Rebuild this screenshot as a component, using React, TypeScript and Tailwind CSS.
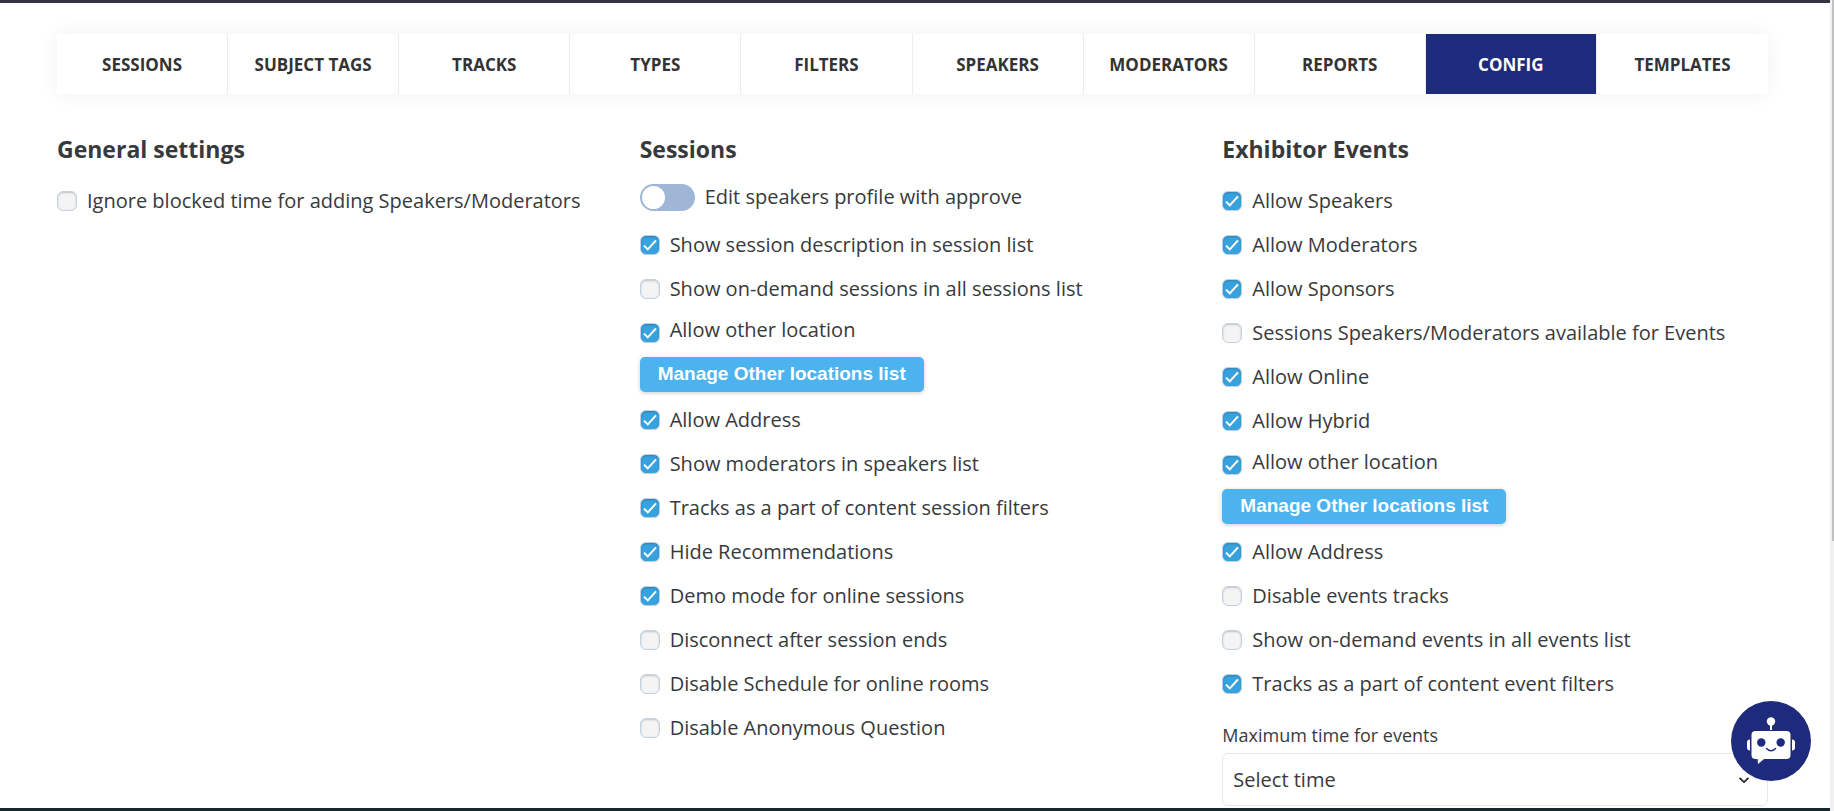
import { useId, useState } from "react";

const tabs = [
  "Sessions",
  "Subject tags",
  "Tracks",
  "Types",
  "Filters",
  "Speakers",
  "Moderators",
  "Reports",
  "Config",
  "Templates",
];

type Option = { label: string; on?: boolean; manage?: boolean };

const general: Option[] = [{ label: "Ignore blocked time for adding Speakers/Moderators" }];

const sessions: Option[] = [
  { label: "Show session description in session list", on: true },
  { label: "Show on-demand sessions in all sessions list" },
  { label: "Allow other location", on: true, manage: true },
  { label: "Allow Address", on: true },
  { label: "Show moderators in speakers list", on: true },
  { label: "Tracks as a part of content session filters", on: true },
  { label: "Hide Recommendations", on: true },
  { label: "Demo mode for online sessions", on: true },
  { label: "Disconnect after session ends" },
  { label: "Disable Schedule for online rooms" },
  { label: "Disable Anonymous Question" },
];

const exhibitor: Option[] = [
  { label: "Allow Speakers", on: true },
  { label: "Allow Moderators", on: true },
  { label: "Allow Sponsors", on: true },
  { label: "Sessions Speakers/Moderators available for Events" },
  { label: "Allow Online", on: true },
  { label: "Allow Hybrid", on: true },
  { label: "Allow other location", on: true, manage: true },
  { label: "Allow Address", on: true },
  { label: "Disable events tracks" },
  { label: "Show on-demand events in all events list" },
  { label: "Tracks as a part of content event filters", on: true },
];

function CheckRow({ label, on = false, manage = false }: Option) {
  const id = useId();
  return (
    <>
      <div className="flex h-11 items-center gap-[10px]">
        <span className="grid size-5 shrink-0">
          <input
            id={id}
            type="checkbox"
            defaultChecked={on}
            className="peer col-start-1 row-start-1 size-5 appearance-none rounded-[6px] border border-[#c3d0e4] bg-[#f4f4f4] shadow-[inset_0_1px_2px_rgba(0,0,0,0.2)] checked:bg-[#37a2de]"
          />
          <svg
            viewBox="0 0 20 20"
            className="pointer-events-none invisible col-start-1 row-start-1 size-5 peer-checked:visible"
            fill="none"
            stroke="#fff"
            strokeWidth="2"
            aria-hidden="true"
          >
            <path d="M4 10.6 7.8 14.4 16 5.4" />
          </svg>
        </span>
        <label htmlFor={id} className={manage ? "pb-[6px]" : ""}>
          {label}
        </label>
      </div>
      {manage && (
        <button
          type="button"
          className="mt-[2px] mb-[6px] block h-[35px] rounded-[5px] bg-[#4cb3ef] px-[18px] pb-[2px] font-['Liberation_Sans',sans-serif] text-[19px] font-bold text-white shadow-[0_1px_4px_rgba(0,0,0,0.2)]"
        >
          Manage Other locations list
        </button>
      )}
    </>
  );
}

function Heading({ children }: { children: string }) {
  return <h2 className="mb-[15px] text-[23px] leading-[30px] font-bold">{children}</h2>;
}

function Toggle() {
  const id = useId();
  return (
    <div className="mb-2 flex h-9 items-center gap-[10px]">
      <span className="grid h-[27px] w-[55px] items-center">
        <input
          id={id}
          type="checkbox"
          role="switch"
          className="peer col-start-1 row-start-1 h-[27px] w-[55px] appearance-none rounded-full bg-[#9fb6d7] checked:bg-[#37a2de]"
        />
        <span className="pointer-events-none col-start-1 row-start-1 ml-[2px] size-[23px] rounded-full bg-white peer-checked:ml-[30px]" />
      </span>
      <label htmlFor={id}>Edit speakers profile with approve</label>
    </div>
  );
}

export default function App() {
  const [active, setActive] = useState("Config");
  const timeId = useId();
  return (
    <div className="flex h-screen overflow-hidden bg-white font-['Open_Sans','Noto_Sans',sans-serif] text-[20px] leading-7 text-[#373a3c]">
      <div className="flex min-w-0 flex-1 flex-col">
        <div className="h-[3px] shrink-0 bg-[#343541]" />
        <main className="min-h-0 flex-1 overflow-hidden pt-[31px] pr-[62px] pl-[57px]">
          <nav className="grid h-[60px] grid-cols-10 bg-white shadow-[0_0_20px_rgba(0,0,0,0.06)]">
            {tabs.map((tab) => (
              <button
                key={tab}
                type="button"
                onClick={() => setActive(tab)}
                className={
                  "border-r border-[#ececf1] pt-[2px] text-[17px] font-bold uppercase last:border-r-0 " +
                  (tab === active ? "bg-[#1e2a7b] text-white" : "text-[#333]")
                }
              >
                {tab}
              </button>
            ))}
          </nav>
          <div className="mt-10 grid grid-cols-3 gap-[37px]">
            <section>
              <Heading>General settings</Heading>
              {general.map((o) => (
                <CheckRow key={o.label} {...o} />
              ))}
            </section>
            <section>
              <Heading>Sessions</Heading>
              <Toggle />
              {sessions.map((o) => (
                <CheckRow key={o.label} {...o} />
              ))}
            </section>
            <section>
              <Heading>Exhibitor Events</Heading>
              {exhibitor.map((o) => (
                <CheckRow key={o.label} {...o} />
              ))}
              <label htmlFor={timeId} className="mt-[15px] block text-[18px] leading-7">
                Maximum time for events
              </label>
              <div className="mt-1 grid h-[53px] items-center">
                <select
                  id={timeId}
                  className="col-start-1 row-start-1 h-full w-full appearance-none rounded-[6px] border border-[#e6e6e6] bg-white px-[10px]"
                >
                  <option>Select time</option>
                </select>
                <svg
                  viewBox="0 0 12 8"
                  className="pointer-events-none col-start-1 row-start-1 mr-[18px] h-2 w-3 justify-self-end"
                  fill="none"
                  stroke="#222"
                  strokeWidth="1.7"
                  aria-hidden="true"
                >
                  <path d="M1.5 1.8 6 6 10.5 1.8" />
                </svg>
              </div>
            </section>
          </div>
        </main>
        <div className="h-[3px] shrink-0 bg-[#16272e]" />
      </div>
      <div className="flex w-1 shrink-0 flex-col bg-[#f1f1f1] pl-[2px]">
        <div className="h-2/3 bg-[#c1c1c1]" />
      </div>
      <button
        type="button"
        aria-label="Open chat"
        className="fixed right-[23px] bottom-[30px] size-20 rounded-full"
      >
        <svg viewBox="0 0 80 80" className="size-20" aria-hidden="true">
          <circle cx="40" cy="40" r="40" fill="#1e2a7b" />
          <g fill="#fff">
            <circle cx="40" cy="20.5" r="4.2" />
            <path d="M39 23h2v6h-2zM26.5 56h9L27 63z" />
            <rect x="20.5" y="30" width="39" height="28" rx="4" />
            <path d="M19 38.5v11c-2 0-3-1-3-3v-5c0-2 1-3 3-3zM61 38.5v11c2 0 3-1 3-3v-5c0-2-1-3-3-3z" />
          </g>
          <circle cx="30.3" cy="41.5" r="4.2" fill="#1e2a7b" />
          <circle cx="49.7" cy="41.5" r="4.2" fill="#1e2a7b" />
          <path d="M35.5 47.5q4.5 4.5 9 0" fill="none" stroke="#1e2a7b" strokeWidth="1.5" strokeLinecap="round" />
        </svg>
      </button>
    </div>
  );
}
